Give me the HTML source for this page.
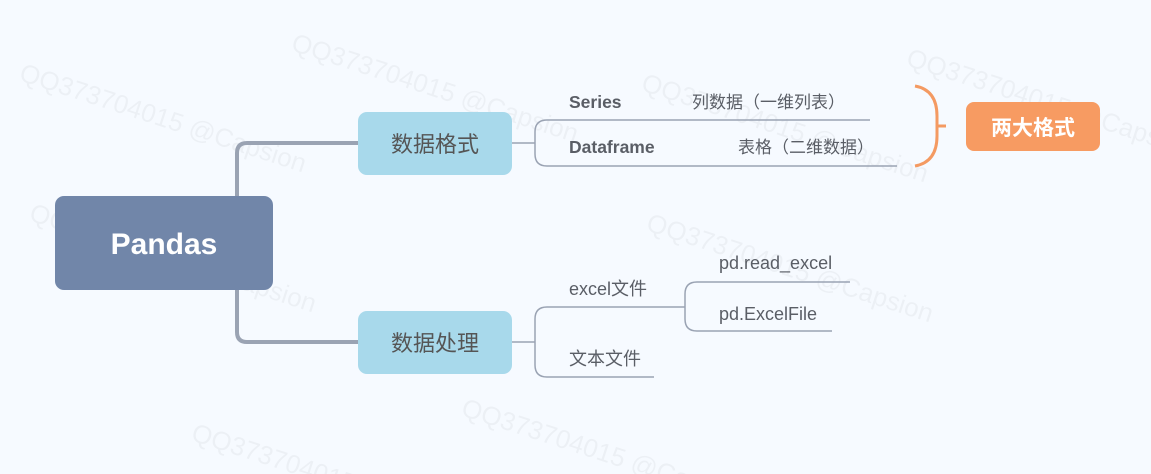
<!DOCTYPE html>
<html><head><meta charset="utf-8"><style>
html,body{margin:0;padding:0;background:#f6faff;width:1151px;height:474px;overflow:hidden;}
svg{display:block}
text{font-family:"Liberation Sans","Noto Sans CJK SC",sans-serif;}
</style></head><body>
<svg width="1151" height="474" viewBox="0 0 1151 474" xmlns="http://www.w3.org/2000/svg">
<rect width="1151" height="474" fill="#f6faff"/>
<g fill="#000" fill-opacity="0.04" font-size="26" font-family="Liberation Sans,sans-serif">
<text transform="translate(18,80) rotate(18)">QQ373704015 @Capsion</text>
<text transform="translate(290,50) rotate(18)">QQ373704015 @Capsion</text>
<text transform="translate(640,90) rotate(18)">QQ373704015 @Capsion</text>
<text transform="translate(905,65) rotate(18)">QQ373704015 @Capsion</text>
<text transform="translate(28,220) rotate(18)">QQ373704015 @Capsion</text>
<text transform="translate(645,230) rotate(18)">QQ373704015 @Capsion</text>
<text transform="translate(460,415) rotate(18)">QQ373704015 @Capsion</text>
<text transform="translate(190,440) rotate(18)">QQ373704015 @Capsion</text>
</g>
<g fill="none" stroke="#9aa3b3" stroke-width="4">
<path d="M237 196 V153 Q237 143 247 143 H358"/>
<path d="M237 290 V332 Q237 342 247 342 H358"/>
</g>
<g fill="none" stroke="#9aa3b3" stroke-width="1.5">
<path d="M512 143 H535"/>
<path d="M870 120 H547 Q535 120 535 132 V154 Q535 166 547 166 H897"/>
<path d="M512 342 H535"/>
<path d="M685 307 H547 Q535 307 535 319 V365 Q535 377 547 377 H654"/>
<path d="M850 282 H697 Q685 282 685 294 V319 Q685 331 697 331 H832"/>
</g>
<path d="M915 86 Q937 90 937 116 V136 Q937 162 915 166 M937 126 H946" fill="none" stroke="#f49a62" stroke-width="3"/>
<rect x="55" y="196" width="218" height="94" rx="9" fill="#7186a9"/>
<text x="164" y="254" font-size="30" font-weight="bold" fill="#fff" text-anchor="middle">Pandas</text>
<rect x="358" y="112" width="154" height="63" rx="9" fill="#a8d9eb"/>
<text x="435" y="152" font-size="22" fill="#555" text-anchor="middle">数据格式</text>
<rect x="358" y="311" width="154" height="63" rx="9" fill="#a8d9eb"/>
<text x="435" y="351" font-size="22" fill="#555" text-anchor="middle">数据处理</text>
<rect x="966" y="102" width="134" height="49" rx="8" fill="#f79b62"/>
<text x="1033" y="135" font-size="21" font-weight="bold" fill="#fff" text-anchor="middle">两大格式</text>
<g fill="#5a5e66" font-size="18">
<text x="569" y="108" font-weight="bold" font-size="17.5">Series</text>
<text x="692" y="108" font-size="17">列数据（一维列表）</text>
<text x="569" y="153" font-weight="bold" font-size="17.5">Dataframe</text>
<text x="738" y="153" font-size="17">表格（二维数据）</text>
<text x="569" y="295">excel文件</text>
<text x="569" y="365">文本文件</text>
<text x="719" y="269">pd.read_excel</text>
<text x="719" y="320">pd.ExcelFile</text>
</g>
</svg>
</body></html>
